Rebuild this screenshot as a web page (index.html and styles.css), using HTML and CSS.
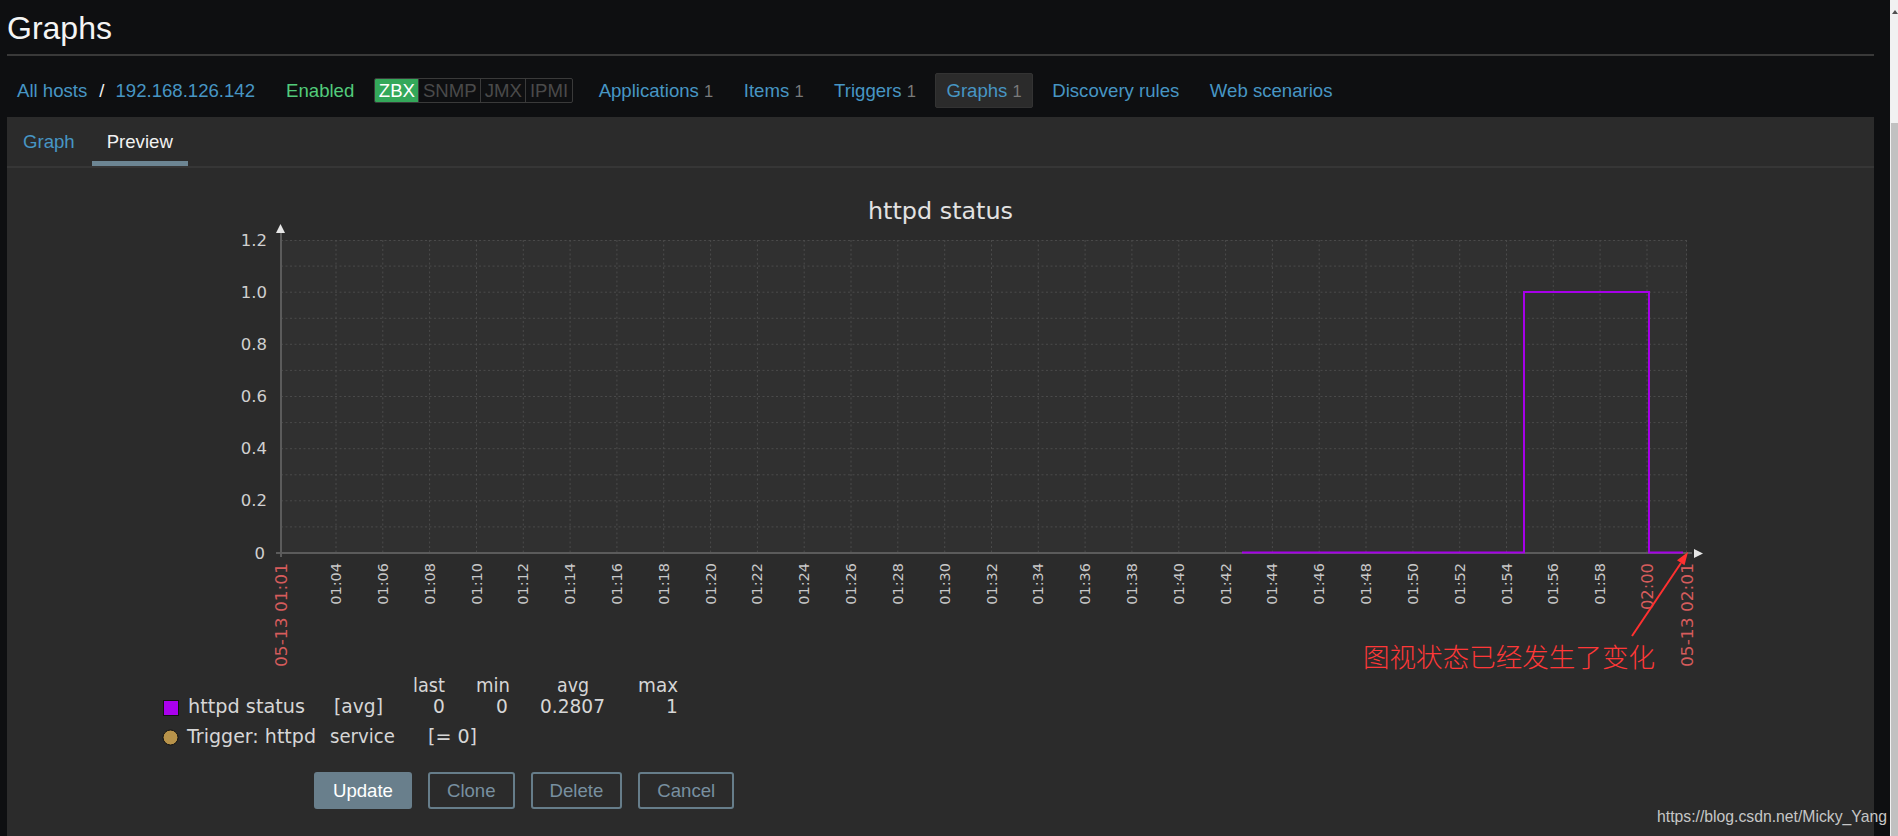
FILE: index.html
```html
<!DOCTYPE html>
<html lang="en">
<head>
<meta charset="utf-8">
<title>Graphs</title>
<link rel="stylesheet" href="styles.css">
</head>
<body>
<div class="page">
  <div class="main">
    <header class="header"><h1 class="title">Graphs</h1></header>
    <nav class="nav">
      <a class="link">All hosts</a><span class="sep">/</span><a class="link">192.168.126.142</a>
      <span class="status">Enabled</span>
      <span class="badges"><span class="badge on">ZBX</span><span class="badge">SNMP</span><span class="badge">JMX</span><span class="badge">IPMI</span></span>
      <ul class="navlinks">
        <li class="navlink">Applications <span class="count">1</span></li>
        <li class="navlink">Items <span class="count">1</span></li>
        <li class="navlink">Triggers <span class="count">1</span></li>
        <li class="navlink selected">Graphs <span class="count">1</span></li>
        <li class="navlink">Discovery rules</li>
        <li class="navlink">Web scenarios</li>
      </ul>
    </nav>
    <section class="panel">
      <ul class="tabs">
        <li class="tab">Graph</li>
        <li class="tab active">Preview</li>
      </ul>
      <div class="chart-wrap">
        <svg class="chart" width="1600" height="575" viewBox="140 180 1600 575" xmlns="http://www.w3.org/2000/svg">
          <text class="ctitle" x="868" y="219" textLength="145" lengthAdjust="spacingAndGlyphs">httpd status</text>
          <rect class="plot" x="281" y="240" width="1406" height="313"/>
          <path class="grid" d="M281 526.9H1687M281 500.8H1687M281 474.8H1687M281 448.7H1687M281 422.6H1687M281 396.5H1687M281 370.4H1687M281 344.3H1687M281 318.3H1687M281 292.2H1687M281 266.1H1687M281 240.5H1687"/>
          <path class="grid" d="M336 240V553M382.8 240V553M429.6 240V553M476.5 240V553M523.3 240V553M570.1 240V553M616.9 240V553M663.7 240V553M710.6 240V553M757.4 240V553M804.2 240V553M851 240V553M897.8 240V553M944.7 240V553M991.5 240V553M1038.3 240V553M1085.1 240V553M1131.9 240V553M1178.8 240V553M1225.6 240V553M1272.4 240V553M1319.2 240V553M1366 240V553M1412.9 240V553M1459.7 240V553M1506.5 240V553M1553.3 240V553M1600.1 240V553M1647 240V553M1686.5 240V553"/>
          <path class="axis" d="M281 233V557M276 553H1692"/>
          <polygon class="arrowhead" points="280.5,224 276,233 285,233"/>
          <polygon class="arrowhead" points="1694,549 1694,558 1703,553.5"/>

          <g class="ylab">
            <text x="267" y="246">1.2</text>
            <text x="267" y="298">1.0</text>
            <text x="267" y="350">0.8</text>
            <text x="267" y="402">0.6</text>
            <text x="267" y="454">0.4</text>
            <text x="267" y="506">0.2</text>
            <text x="265" y="559">0</text>
          </g>

          <g class="xlab">
            <text transform="translate(341 563) rotate(-90)" textLength="41.7" lengthAdjust="spacingAndGlyphs">01:04</text>
            <text transform="translate(387.8 563) rotate(-90)" textLength="41.7" lengthAdjust="spacingAndGlyphs">01:06</text>
            <text transform="translate(434.6 563) rotate(-90)" textLength="41.7" lengthAdjust="spacingAndGlyphs">01:08</text>
            <text transform="translate(481.5 563) rotate(-90)" textLength="41.7" lengthAdjust="spacingAndGlyphs">01:10</text>
            <text transform="translate(528.3 563) rotate(-90)" textLength="41.7" lengthAdjust="spacingAndGlyphs">01:12</text>
            <text transform="translate(575.1 563) rotate(-90)" textLength="41.7" lengthAdjust="spacingAndGlyphs">01:14</text>
            <text transform="translate(621.9 563) rotate(-90)" textLength="41.7" lengthAdjust="spacingAndGlyphs">01:16</text>
            <text transform="translate(668.7 563) rotate(-90)" textLength="41.7" lengthAdjust="spacingAndGlyphs">01:18</text>
            <text transform="translate(715.6 563) rotate(-90)" textLength="41.7" lengthAdjust="spacingAndGlyphs">01:20</text>
            <text transform="translate(762.4 563) rotate(-90)" textLength="41.7" lengthAdjust="spacingAndGlyphs">01:22</text>
            <text transform="translate(809.2 563) rotate(-90)" textLength="41.7" lengthAdjust="spacingAndGlyphs">01:24</text>
            <text transform="translate(856 563) rotate(-90)" textLength="41.7" lengthAdjust="spacingAndGlyphs">01:26</text>
            <text transform="translate(902.8 563) rotate(-90)" textLength="41.7" lengthAdjust="spacingAndGlyphs">01:28</text>
            <text transform="translate(949.7 563) rotate(-90)" textLength="41.7" lengthAdjust="spacingAndGlyphs">01:30</text>
            <text transform="translate(996.5 563) rotate(-90)" textLength="41.7" lengthAdjust="spacingAndGlyphs">01:32</text>
            <text transform="translate(1043.3 563) rotate(-90)" textLength="41.7" lengthAdjust="spacingAndGlyphs">01:34</text>
            <text transform="translate(1090.1 563) rotate(-90)" textLength="41.7" lengthAdjust="spacingAndGlyphs">01:36</text>
            <text transform="translate(1136.9 563) rotate(-90)" textLength="41.7" lengthAdjust="spacingAndGlyphs">01:38</text>
            <text transform="translate(1183.8 563) rotate(-90)" textLength="41.7" lengthAdjust="spacingAndGlyphs">01:40</text>
            <text transform="translate(1230.6 563) rotate(-90)" textLength="41.7" lengthAdjust="spacingAndGlyphs">01:42</text>
            <text transform="translate(1277.4 563) rotate(-90)" textLength="41.7" lengthAdjust="spacingAndGlyphs">01:44</text>
            <text transform="translate(1324.2 563) rotate(-90)" textLength="41.7" lengthAdjust="spacingAndGlyphs">01:46</text>
            <text transform="translate(1371 563) rotate(-90)" textLength="41.7" lengthAdjust="spacingAndGlyphs">01:48</text>
            <text transform="translate(1417.9 563) rotate(-90)" textLength="41.7" lengthAdjust="spacingAndGlyphs">01:50</text>
            <text transform="translate(1464.7 563) rotate(-90)" textLength="41.7" lengthAdjust="spacingAndGlyphs">01:52</text>
            <text transform="translate(1511.5 563) rotate(-90)" textLength="41.7" lengthAdjust="spacingAndGlyphs">01:54</text>
            <text transform="translate(1558.3 563) rotate(-90)" textLength="41.7" lengthAdjust="spacingAndGlyphs">01:56</text>
            <text transform="translate(1605.1 563) rotate(-90)" textLength="41.7" lengthAdjust="spacingAndGlyphs">01:58</text>
          </g>
          <g class="xlab red">
            <text transform="translate(287 563) rotate(-90)" textLength="104" lengthAdjust="spacingAndGlyphs">05-13 01:01</text>
            <text transform="translate(1653 563) rotate(-90)" textLength="47" lengthAdjust="spacingAndGlyphs">02:00</text>
            <text transform="translate(1692.5 563) rotate(-90)" textLength="104" lengthAdjust="spacingAndGlyphs">05-13 02:01</text>
          </g>

          <polyline class="series" points="1242,552.5 1524,552.5 1524,292 1649,292 1649,552.5 1683,552.5"/>

          <line class="note-line" x1="1632" y1="636" x2="1681" y2="563"/>
          <polygon class="note-head" points="1688,552 1684.5,565.3 1677,560.3"/>
          <text class="note" x="1363" y="667" textLength="292" lengthAdjust="spacingAndGlyphs">图视状态已经发生了变化</text>

          <g class="legend">
            <text x="413" y="692" textLength="32" lengthAdjust="spacingAndGlyphs">last</text>
            <text x="476" y="692" textLength="34" lengthAdjust="spacingAndGlyphs">min</text>
            <text x="557" y="692" textLength="32" lengthAdjust="spacingAndGlyphs">avg</text>
            <text x="638" y="692" textLength="40" lengthAdjust="spacingAndGlyphs">max</text>
            <rect class="swatch" x="163.5" y="700.5" width="15" height="15"/>
            <text x="188" y="713" textLength="117" lengthAdjust="spacingAndGlyphs">httpd status</text>
            <text x="334" y="713" textLength="49" lengthAdjust="spacingAndGlyphs">[avg]</text>
            <text x="433" y="713">0</text>
            <text x="496" y="713">0</text>
            <text x="540" y="713" textLength="65" lengthAdjust="spacingAndGlyphs">0.2807</text>
            <text x="666" y="713">1</text>
            <circle class="trigger-dot" cx="170.5" cy="737.5" r="7.5"/>
            <text x="187" y="743" textLength="129" lengthAdjust="spacingAndGlyphs">Trigger: httpd</text>
            <text x="330" y="743" textLength="65" lengthAdjust="spacingAndGlyphs">service</text>
            <text x="428" y="743" textLength="49" lengthAdjust="spacingAndGlyphs">[= 0]</text>
          </g>
        </svg>
      </div>
      <div class="buttons">
        <button class="btn primary">Update</button>
        <button class="btn">Clone</button>
        <button class="btn">Delete</button>
        <button class="btn">Cancel</button>
      </div>
    </section>
  </div>
  <div class="scrollbar">
    <div class="scroll-track"><span class="scroll-arrow"></span></div>
    <div class="scroll-thumb"></div>
  </div>
</div>
<div class="watermark">https://blog.csdn.net/Micky_Yang</div>
</body>
</html>
```

FILE: styles.css
```css
html, body {
  margin: 0;
  padding: 0;
}
body {
  width: 1898px;
  height: 836px;
  overflow: hidden;
  background: #0e0f11;
  font-family: "Liberation Sans", Arial, sans-serif;
  font-size: 18.6px;
  color: #f2f2f2;
  position: relative;
}
ul {
  list-style: none;
  margin: 0;
  padding: 0;
}
.page {
  display: flex;
  height: 836px;
}
.main {
  width: 1867px;
  margin: 0 16px 0 7px;
  display: flex;
  flex-direction: column;
}
.header {
  padding: 8px 0 6px;
  border-bottom: 2px solid #393939;
}
.title {
  margin: 0;
  font-size: 32px;
  line-height: 40px;
  font-weight: normal;
  color: #f4f4f4;
}
.nav {
  display: flex;
  align-items: center;
  height: 35px;
  padding: 17px 0 9px 10px;
  white-space: nowrap;
}
.link {
  color: #4796c4;
  line-height: 35px;
}
.sep {
  margin: 0 11px 0 12px;
  color: #f2f2f2;
}
.status {
  margin-left: 31px;
  color: #52cb7b;
}
.badges {
  display: flex;
  margin-left: 20px;
  border: 1px solid #3a3a3a;
  border-radius: 2px;
  overflow: hidden;
  height: 23px;
}
.badge {
  padding: 0 3.5px;
  line-height: 23px;
  color: #4a4a4a;
}
.badge + .badge {
  border-left: 1px solid #3a3a3a;
}
.badge.on {
  background: #34a85a;
  color: #ffffff;
}
.navlinks {
  display: flex;
  gap: 8.5px;
  margin-left: 15px;
}
.navlink {
  box-sizing: border-box;
  height: 35px;
  line-height: 35px;
  padding: 0 11px;
  color: #4796c4;
  border-radius: 2px;
}
.navlink.selected {
  background: #2b2b2b;
  border: 1px solid #333333;
  line-height: 33px;
  padding: 0 10px;
}
.count {
  color: #7a7a7a;
  font-size: 16.5px;
}
.panel {
  flex: 1;
  background: #2b2b2b;
  display: flex;
  flex-direction: column;
}
.tabs {
  display: flex;
  gap: 2px;
  padding-left: 1px;
  height: 49px;
  border-bottom: 2px solid #363636;
}
.tab {
  box-sizing: border-box;
  height: 49px;
  padding: 14px 15px 0;
  line-height: 22px;
  border-bottom: 5px solid transparent;
  color: #4796c4;
}
.tab.active {
  color: #f2f2f2;
  border-bottom-color: #6c8593;
}
.chart-wrap {
  margin: 12px 0 0 133px;
  height: 575px;
}
.chart {
  display: block;
  font-family: "DejaVu Sans", sans-serif;
}
.ctitle {
  font-size: 23px;
  fill: #e2e2e2;
}
.plot {
  fill: #303030;
}
.grid {
  fill: none;
  stroke: #4a4a4a;
  stroke-width: 1;
  stroke-dasharray: 2 2.5;
}
.axis {
  fill: none;
  stroke: #5b5b5b;
  stroke-width: 2;
}
.arrowhead {
  fill: #e6e6e6;
}
.ylab text {
  font-size: 16.5px;
  fill: #d0d0d0;
  text-anchor: end;
}
.xlab text {
  font-size: 14.5px;
  fill: #c8c8c8;
  text-anchor: end;
}
.xlab.red text {
  font-size: 16.5px;
  fill: #d65c5c;
}
.series {
  fill: none;
  stroke: #a600e8;
  stroke-width: 2;
}
.note-line {
  stroke: #ff3030;
  stroke-width: 2;
}
.note-head {
  fill: #ff3030;
}
.note {
  font-family: "Noto Sans CJK SC", sans-serif;
  font-weight: 300;
  font-size: 26.5px;
  fill: #ff3838;
}
.legend text {
  font-size: 18.6px;
  fill: #d6d6d6;
}
.swatch {
  fill: #aa00ee;
  stroke: #111111;
  stroke-width: 1;
}
.trigger-dot {
  fill: #b8934a;
  stroke: #111111;
  stroke-width: 1;
}
.buttons {
  display: flex;
  gap: 16px;
  margin-top: 17px;
  padding-left: 307px;
}
.btn {
  box-sizing: border-box;
  height: 37px;
  padding: 0 17px;
  border: 2px solid #667d8a;
  border-radius: 3px;
  background: transparent;
  color: #7890a0;
  font-family: "Liberation Sans", Arial, sans-serif;
  font-size: 18.6px;
  line-height: 33px;
}
.btn.primary {
  background: #697f8c;
  border-color: #697f8c;
  color: #ffffff;
}
.scrollbar {
  width: 8px;
  background: #f1f1f1;
  display: flex;
  flex-direction: column;
}
.scroll-track {
  height: 123px;
  position: relative;
}
.scroll-arrow {
  position: absolute;
  top: 10px;
  right: 0;
  width: 0;
  height: 0;
  border-left: 3px solid transparent;
  border-right: 3px solid transparent;
  border-bottom: 4px solid #505050;
}
.scroll-thumb {
  flex: 1;
  margin-left: 1px;
  background: #c1c1c1;
}
.watermark {
  position: absolute;
  left: 1657px;
  top: 808px;
  font-size: 15.75px;
  line-height: 18px;
  color: #c6c6c6;
  white-space: nowrap;
}
```
